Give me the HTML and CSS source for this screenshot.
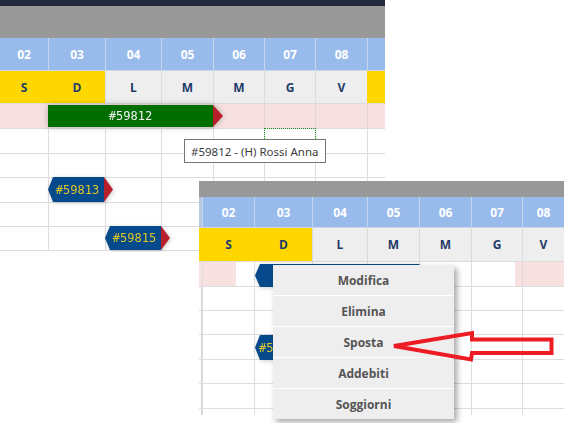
FILE: index.html
```html
<!DOCTYPE html>
<html lang="it">
<head>
<meta charset="utf-8">
<title>Planning</title>
<link rel="stylesheet" href="styles.css">
</head>
<body>
<div class="canvas">
  <section class="shot back">
    <div class="topbar"></div>
    <div class="graybar"></div>
    <div class="row head">
      <div class="c">02</div><div class="c">03</div><div class="c">04</div><div class="c">05</div><div class="c">06</div><div class="c">07</div><div class="c">08</div><div class="c"></div>
    </div>
    <div class="row days">
      <div class="c we">S</div><div class="c we">D</div><div class="c">L</div><div class="c">M</div><div class="c">M</div><div class="c">G</div><div class="c">V</div><div class="c we"></div>
    </div>
    <div class="row pink">
      <div class="c"></div><div class="c"></div><div class="c"></div><div class="c"></div><div class="c"></div><div class="c"></div><div class="c"></div><div class="c"></div>
    </div>
    <div class="row blank"><div class="c"></div><div class="c"></div><div class="c"></div><div class="c"></div><div class="c"></div><div class="c"></div><div class="c"></div><div class="c"></div></div>
    <div class="row blank r24"><div class="c"></div><div class="c"></div><div class="c"></div><div class="c"></div><div class="c"></div><div class="c"></div><div class="c"></div><div class="c"></div></div>
    <div class="row blank"><div class="c"></div><div class="c"></div><div class="c"></div><div class="c"></div><div class="c"></div><div class="c"></div><div class="c"></div><div class="c"></div></div>
    <div class="row blank r24"><div class="c"></div><div class="c"></div><div class="c"></div><div class="c"></div><div class="c"></div><div class="c"></div><div class="c"></div><div class="c"></div></div>
    <div class="row blank r24"><div class="c"></div><div class="c"></div><div class="c"></div><div class="c"></div><div class="c"></div><div class="c"></div><div class="c"></div><div class="c"></div></div>

    <div class="booking green-bar"><span>#59812</span><i class="tip"></i></div>
    <div class="focus-cell"></div>
    <div class="booking badge back-b1"><span>#59813</span><i class="tip"></i></div>
    <div class="booking badge back-b2"><span>#59815</span><i class="tip"></i></div>
  </section>

  <div class="tooltip">#59812 - (H) Rossi Anna</div>

  <section class="shot front">
    <div class="graybar thin"></div>
    <div class="row head">
      <div class="c edge"></div><div class="c">02</div><div class="c">03</div><div class="c">04</div><div class="c">05</div><div class="c">06</div><div class="c">07</div><div class="c">08</div>
    </div>
    <div class="row days">
      <div class="c we edge"></div><div class="c we">S</div><div class="c we">D</div><div class="c">L</div><div class="c">M</div><div class="c">M</div><div class="c">G</div><div class="c">V</div>
    </div>
    <div class="row pink">
      <div class="c edge"></div><div class="c half-l"></div><div class="c w"></div><div class="c w"></div><div class="c w"></div><div class="c w"></div><div class="c half-r"></div><div class="c"></div>
    </div>
    <div class="row blank r24"><div class="c edge"></div><div class="c"></div><div class="c"></div><div class="c"></div><div class="c"></div><div class="c"></div><div class="c"></div><div class="c"></div></div>
    <div class="row blank r24"><div class="c edge"></div><div class="c"></div><div class="c"></div><div class="c"></div><div class="c"></div><div class="c"></div><div class="c"></div><div class="c"></div></div>
    <div class="row blank"><div class="c edge"></div><div class="c"></div><div class="c"></div><div class="c"></div><div class="c"></div><div class="c"></div><div class="c"></div><div class="c"></div></div>
    <div class="row blank r24"><div class="c edge"></div><div class="c"></div><div class="c"></div><div class="c"></div><div class="c"></div><div class="c"></div><div class="c"></div><div class="c"></div></div>
    <div class="row blank"><div class="c edge"></div><div class="c"></div><div class="c"></div><div class="c"></div><div class="c"></div><div class="c"></div><div class="c"></div><div class="c"></div></div>
    <div class="row blank"><div class="c edge"></div><div class="c"></div><div class="c"></div><div class="c"></div><div class="c"></div><div class="c"></div><div class="c"></div><div class="c"></div></div>

    <div class="booking badge front-b1"><span></span><i class="tip"></i></div>
    <div class="booking badge front-b2"><span>#5</span></div>
  </section>

  <ul class="menu">
    <li>Modifica</li>
    <li>Elimina</li>
    <li>Sposta</li>
    <li>Addebiti</li>
    <li>Soggiorni</li>
  </ul>

  <svg class="arrow" width="568" height="423" viewBox="0 0 568 423">
    <polygon points="394,346 472,333 472,339.5 551.5,339.5 551.5,353 472,353 471,359.5" fill="none" stroke="#ed1c24" stroke-width="4" stroke-linejoin="miter"/>
  </svg>
</div>
</body>
</html>
```

FILE: styles.css
```css
* { box-sizing: border-box; }
html, body { margin: 0; padding: 0; background: #fff; }
body { font-family: "Open Sans", "Noto Sans", sans-serif; }

.canvas {
  position: relative;
  width: 568px;
  height: 423px;
  overflow: hidden;
  background: #fff;
}

.shot {
  position: absolute;
  display: flex;
  flex-direction: column;
  background: #fff;
  overflow: hidden;
}

.back { left: 0; top: 0; width: 385px; height: 252px; }
.front { left: 199px; top: 181px; width: 365px; height: 234px; }

.back .row { grid-template-columns: 48px 57px 56px 52px 51px 51px 52px 18px; }
.front .row { grid-template-columns: 3px 52px 58px 55px 52px 52px 51px 42px; }

.topbar { height: 6px; background: #212b3d; flex: none; }
.graybar { height: 32px; background: #999999; flex: none; }
.graybar.thin { height: 16px; background: #989898; }

.row {
  display: grid;
  flex: none;
  border-bottom: 1px solid #dcdcdc;
}
.c {
  border-left: 1px solid #dddddd;
  display: flex;
  align-items: center;
  justify-content: center;
  font-weight: 700;
  font-size: 12px;
}
.row .c:first-child { border-left: none; }

.head { height: 33px; background: #98bbec; border-bottom-color: #c9d6e8; }
.head .c { color: #fff; border-left-color: #c6d5ea; }
.front .head { height: 31px; }
.front .head .edge { background: #b7c9e2; }

.days { height: 33px; background: #eeeeee; border-bottom-color: #dcdcdc; }
.days .c { color: #1e3a68; border-left-color: #dcdcdc; }
.days .we { background: #ffd700; border-left-color: transparent; }
.front .days { height: 34px; }

.pink { height: 25px; background: #f7e1e1; border-bottom-color: #dddddd; }
.pink .c { border-left-color: #e6d3d3; }
.front .pink .w { background: #fff; border-left-color: #dddddd; }
.front .pink .half-l { background: linear-gradient(to right, #f7e1e1 33px, #fff 33px); border-left-color: #dddddd; }
.front .pink .half-r { background: linear-gradient(to right, #fff 43px, #f7e1e1 43px); border-left-color: #dddddd; }

.blank { height: 25px; background: #fff; border-bottom-color: #dddddd; }
.blank.r24 { height: 24px; }
.front .blank .edge { border-right: 1px solid #d4d4d4; }

/* bookings */
.booking {
  position: absolute;
  display: flex;
  align-items: center;
  font-family: "DejaVu Sans Mono", "Liberation Mono", monospace;
  font-size: 12px;
}
.booking span {
  flex: 1;
  height: 100%;
  display: flex;
  align-items: center;
  justify-content: center;
}
.booking .tip {
  width: 9px;
  height: 100%;
  background: #b81f2d;
  clip-path: polygon(0 0, 100% 50%, 0 100%);
  flex: none;
}

.green-bar {
  left: 48px;
  top: 105px;
  width: 175px;
  height: 22px;
  filter: drop-shadow(0 0 3px rgba(0,0,0,0.25));
}
.green-bar span { background: #006e00; color: #f2f2f2; }
.green-bar .tip { width: 10px; }

.badge {
  filter: drop-shadow(1px 1px 2px rgba(0,0,0,0.2));
}
.badge span {
  background: #074a8b;
  color: #dcc628;
  clip-path: polygon(5px 0, 100% 0, 100% 100%, 5px 100%, 0 50%);
  padding-left: 3px;
}
.back-b1 { left: 48px; top: 177px; width: 65px; height: 25px; }
.back-b2 { left: 105px; top: 226px; width: 65px; height: 24px; }
.front-b1 { left: 56px; top: 83px; width: 173px; height: 23px; }
.front-b2 { left: 56px; top: 154px; width: 20px; height: 25px; }
.front-b2 span { justify-content: flex-start; padding-left: 4px; }

.focus-cell {
  position: absolute;
  left: 264px;
  top: 128px;
  width: 52px;
  height: 25px;
  border: 1px dotted #1f8a1f;
}

.tooltip {
  position: absolute;
  left: 184px;
  top: 139px;
  width: 142px;
  height: 24px;
  border: 1px solid #767676;
  background: #fff;
  color: #3c3c3c;
  font-family: "Noto Sans", "Open Sans", sans-serif;
  font-size: 11.5px;
  display: flex;
  align-items: center;
  padding-left: 6px;
  white-space: nowrap;
}

.menu {
  position: absolute;
  left: 273px;
  top: 265px;
  width: 181px;
  margin: 0;
  padding: 0;
  list-style: none;
  background: #eeeeee;
  box-shadow: 3px 3px 6px rgba(0,0,0,0.35);
}
.menu li {
  height: 31px;
  border-top: 1px solid #ffffff;
  display: flex;
  align-items: center;
  justify-content: center;
  font-weight: 700;
  font-size: 12px;
  color: #555555;
}
.menu li:first-child { height: 30px; border-top: none; }

.arrow {
  position: absolute;
  left: 0;
  top: 0;
  pointer-events: none;
}
```
